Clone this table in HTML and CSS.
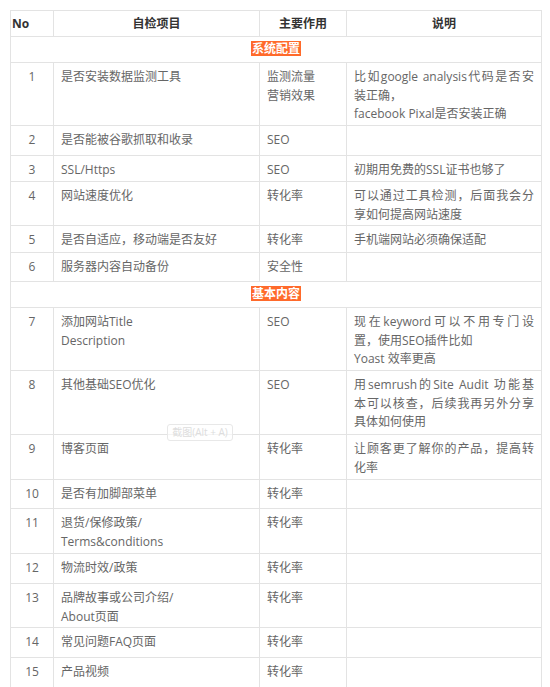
FILE: index.html
```html
<!DOCTYPE html>
<html lang="zh-CN">
<head>
<meta charset="utf-8">
<title>SEO 自检表</title>
<link rel="stylesheet" href="styles.css">
</head>
<body>
<div class="page">
<table class="check">
  <colgroup>
    <col class="c-no"><col class="c-item"><col class="c-use"><col class="c-desc">
  </colgroup>
  <thead>
    <tr class="h26"><th class="th-no">No</th><th>自检项目</th><th>主要作用</th><th>说明</th></tr>
  </thead>
  <tbody>
    <tr class="h26 sec"><td colspan="4"><span class="badge">系统配置</span></td></tr>
    <tr class="h63"><td class="no">1</td><td>是否安装数据监测工具</td><td>监测流量<br>营销效果</td><td><span class="ln j">比如google analysis代码是否安</span><span class="ln">装正确，</span><span class="ln">facebook Pixal是否安装正确</span></td></tr>
    <tr class="h30"><td class="no">2</td><td>是否能被谷歌抓取和收录</td><td>SEO</td><td></td></tr>
    <tr class="h26"><td class="no">3</td><td>SSL/Https</td><td>SEO</td><td>初期用免费的SSL证书也够了</td></tr>
    <tr class="h44"><td class="no">4</td><td>网站速度优化</td><td>转化率</td><td><span class="ln j">可以通过工具检测，后面我会分</span><span class="ln">享如何提高网站速度</span></td></tr>
    <tr class="h27"><td class="no">5</td><td>是否自适应，移动端是否友好</td><td>转化率</td><td>手机端网站必须确保适配</td></tr>
    <tr class="h29"><td class="no">6</td><td>服务器内容自动备份</td><td>安全性</td><td></td></tr>
    <tr class="h26 sec"><td colspan="4"><span class="badge">基本内容</span></td></tr>
    <tr class="h63"><td class="no">7</td><td>添加网站Title<br>Description</td><td>SEO</td><td><span class="ln j">现在keyword可以不用专门设</span><span class="ln">置，使用SEO插件比如</span><span class="ln">Yoast 效率更高</span></td></tr>
    <tr class="h64"><td class="no">8</td><td>其他基础SEO优化</td><td>SEO</td><td><span class="ln j">用semrush的Site Audit 功能基</span><span class="ln j">本可以核查，后续我再另外分享</span><span class="ln">具体如何使用</span></td></tr>
    <tr class="h45"><td class="no">9</td><td>博客页面</td><td>转化率</td><td><span class="ln j">让顾客更了解你的产品，提高转</span><span class="ln">化率</span></td></tr>
    <tr class="h29"><td class="no">10</td><td>是否有加脚部菜单</td><td>转化率</td><td></td></tr>
    <tr class="h45"><td class="no">11</td><td>退货/保修政策/<br>Terms&amp;conditions</td><td>转化率</td><td></td></tr>
    <tr class="h30"><td class="no">12</td><td>物流时效/政策</td><td>转化率</td><td></td></tr>
    <tr class="h44"><td class="no">13</td><td>品牌故事或公司介绍/<br>About页面</td><td>转化率</td><td></td></tr>
    <tr class="h30"><td class="no">14</td><td>常见问题FAQ页面</td><td>转化率</td><td></td></tr>
    <tr class="h30"><td class="no">15</td><td>产品视频</td><td>转化率</td><td></td></tr>
  </tbody>
</table>
<div class="shot-tip">截图(Alt + A)</div>
</div>
</body>
</html>
```
FILE: styles.css
```css
html, body {
  margin: 0;
  padding: 0;
  background: #ffffff;
}
.page {
  position: relative;
  padding: 10px 0 0 10px;
  font-family: "Open Sans", "Noto Sans CJK SC", sans-serif;
  font-size: 12px;
  color: #666666;
}
.check {
  border-collapse: collapse;
  table-layout: fixed;
  width: 531px;
}
.c-no { width: 43px; }
.c-item { width: 206px; }
.c-use { width: 87px; }
.c-desc { width: 195px; }
.check th,
.check td {
  border: 1px solid #e3e3e3;
  padding: 5px 7px 0 7px;
  line-height: 18.5px;
  vertical-align: top;
  text-align: left;
  box-sizing: border-box;
}
.check th {
  color: #333333;
  font-weight: 700;
  text-align: center;
  vertical-align: middle;
  padding-top: 1px;
}
.check th.th-no {
  text-align: left;
  padding-left: 1px;
}
.check td.no {
  text-align: center;
  padding-left: 0;
  padding-right: 0;
}
.sec td {
  text-align: center;
  vertical-align: middle;
  padding: 0;
}
.badge {
  display: inline-block;
  background: #ff6a2b;
  color: #ffffff;
  font-weight: 700;
  line-height: 15px;
  padding: 0 1px;
}
.ln {
  display: block;
}
.ln.j {
  text-align: justify;
  text-align-last: justify;
}
.h26 { height: 26px; }
.h27 { height: 27px; }
.h29 { height: 29px; }
.h30 { height: 30px; }
.h44 { height: 44px; }
.h45 { height: 45px; }
.h63 { height: 63px; }
.h64 { height: 64px; }
.shot-tip {
  position: absolute;
  left: 167px;
  top: 424px;
  width: 66px;
  height: 17px;
  box-sizing: border-box;
  border: 1px solid #e8e8e8;
  border-radius: 3px;
  background: rgba(255, 255, 255, 0.6);
  color: #dddddd;
  font-size: 10px;
  line-height: 15px;
  text-align: center;
  white-space: nowrap;
}
```
